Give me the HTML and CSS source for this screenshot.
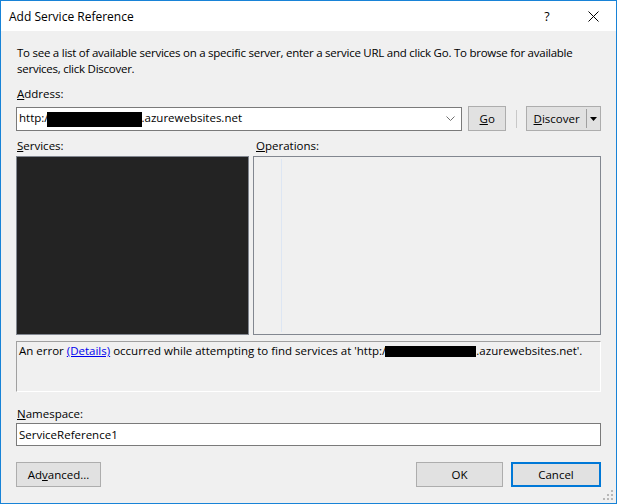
FILE: index.html
```html
<!DOCTYPE html>
<html lang="en">
<head>
    <meta charset="UTF-8">
    <title>Add Service Reference</title>
    <link rel="stylesheet" href="styles.css">
</head>
<body>
    <div class="window">
        <div class="titlebar">
            <span class="title">Add Service Reference</span>
            <span class="help">?</span>
            <span class="close">
                <svg width="11" height="11" viewBox="0 0 11 11"><path d="M0.5 0.5L10.5 10.5M10.5 0.5L0.5 10.5" stroke="#000" stroke-width="1"/></svg>
            </span>
        </div>

        <div class="content">
            <p class="desc">To see a list of available services on a specific server, enter a service URL and click Go. To browse for available services, click Discover.</p>

            <div class="field-label"><u>A</u>ddress:</div>
            <div class="address-row">
                <div class="combo">
                    <span class="combo-text">http:/<span class="redact redact-url"></span>.azurewebsites.net</span>
                    <svg class="chevron" width="9" height="5" viewBox="0 0 9 5"><path d="M0.5 0.5L4.5 4.5L8.5 0.5" fill="none" stroke="#707070"/></svg>
                </div>
                <div class="btn btn-go"><u>G</u>o</div>
                <span class="sep"></span>
                <div class="btn split">
                    <span class="split-main"><u>D</u>iscover</span>
                    <span class="split-arrow">
                        <svg width="7" height="4" viewBox="0 0 7 4"><path d="M0 0H7L3.5 4Z" fill="#000"/></svg>
                    </span>
                </div>
            </div>

            <div class="lists">
                <div class="col col-services">
                    <div class="field-label"><u>S</u>ervices:</div>
                    <div class="list list-dark"></div>
                </div>
                <div class="col col-ops">
                    <div class="field-label ops-label"><u>O</u>perations:</div>
                    <div class="list list-ops"><span class="tree-line"></span></div>
                </div>
            </div>

            <div class="status">An error <a href="#" class="link">(Details)</a> occurred while attempting to find services at 'http:/<span class="redact redact-status"></span>.azurewebsites.net'.</div>

            <div class="field-label ns-label"><u>N</u>amespace:</div>
            <div class="textbox">ServiceReference1</div>

            <div class="footer">
                <div class="btn btn-advanced">Ad<u>v</u>anced...</div>
                <div class="spacer"></div>
                <div class="btn btn-ok">OK</div>
                <div class="btn btn-cancel">Cancel</div>
            </div>
        </div>

        <svg class="grip" width="11" height="11" viewBox="0 0 11 11">
            <rect x="8" y="0" width="2" height="2" fill="#b8b8b8"/>
            <rect x="4" y="4" width="2" height="2" fill="#b8b8b8"/>
            <rect x="8" y="4" width="2" height="2" fill="#b8b8b8"/>
            <rect x="0" y="8" width="2" height="2" fill="#b8b8b8"/>
            <rect x="4" y="8" width="2" height="2" fill="#b8b8b8"/>
            <rect x="8" y="8" width="2" height="2" fill="#b8b8b8"/>
        </svg>
    </div>
</body>
</html>
```

FILE: styles.css
```css
* {
    box-sizing: border-box;
}
body {
    margin: 0;
    font-family: 'Segoe UI', 'Open Sans', 'Noto Sans', sans-serif;
    font-size: 11.5px;
    color: #000;
}
.window {
    position: relative;
    width: 617px;
    height: 504px;
    border: 1px solid #1883d7;
    background: #f0f0f0;
    display: flex;
    flex-direction: column;
}
.titlebar {
    height: 30px;
    background: #fff;
    display: flex;
    align-items: center;
    padding-left: 8px;
}
.title {
    flex: 1;
    font-size: 12px;
}
.help {
    width: 46px;
    text-align: center;
    font-size: 12.5px;
}
.close {
    width: 46px;
    display: flex;
    justify-content: center;
    align-items: center;
}
.content {
    padding: 0 15px;
    display: flex;
    flex-direction: column;
}
.desc {
    margin: 14px 0 0 1px;
    line-height: 16px;
    letter-spacing: -0.25px;
}
.field-label {
    line-height: 16px;
    margin: 9px 0 0 1px;
}
.address-row {
    display: flex;
    align-items: center;
    height: 25px;
    margin-top: 4px;
}
.combo {
    width: 447px;
    height: 24px;
    background: #fff;
    border: 1px solid #7a7a7a;
    display: flex;
    align-items: center;
    padding: 0 0 0 2px;
}
.combo-text {
    flex: 1;
    white-space: nowrap;
}
.chevron {
    margin-right: 6px;
}
.redact {
    display: inline-block;
    background: #000;
    vertical-align: middle;
}
.redact-url {
    width: 95px;
    height: 15px;
    margin-left: -2px;
}
.redact-status {
    width: 91px;
    height: 11px;
    margin-left: -1px;
}
.btn {
    height: 25px;
    background: #e1e1e1;
    border: 1px solid #adadad;
    display: flex;
    align-items: center;
    justify-content: center;
}
.btn-go {
    width: 38px;
    margin-left: 6px;
}
.sep {
    width: 1px;
    height: 18px;
    background: #c8c8c8;
    margin: 0 9px 0 10px;
}
.split {
    width: 75px;
    justify-content: flex-start;
}
.split-main {
    flex: 1;
    text-align: center;
    border-right: 1px solid #a0a0a0;
    line-height: 19px;
}
.split-arrow {
    width: 13px;
    display: flex;
    justify-content: center;
}
.lists {
    display: flex;
    gap: 4px;
    margin-top: -1px;
}
.col-services {
    width: 233px;
}
.col-ops {
    flex: 1;
}
.ops-label {
    margin-left: 3px;
}
.lists .field-label {
    margin-top: 8px;
}
.list {
    height: 179px;
    margin-top: 2px;
    border: 1px solid #828790;
}
.list-dark {
    background: #232323;
}
.list-ops {
    position: relative;
    background: #f0f0f0;
}
.tree-line {
    position: absolute;
    left: 27px;
    top: 2px;
    bottom: 2px;
    width: 1px;
    background: #dde6f3;
}
.status {
    height: 51px;
    margin-top: 6px;
    border: 1px solid #a0a0a0;
    border-right-color: #fff;
    border-bottom-color: #fff;
    padding: 1px 2px;
    line-height: 16px;
}
.link {
    color: #0000ee;
    text-decoration: underline;
}
.ns-label {
    margin-top: 14px;
}
.textbox {
    height: 23px;
    margin-top: 1px;
    background: #fff;
    border: 1px solid #7a7a7a;
    padding: 0 2px;
    line-height: 21px;
}
.footer {
    display: flex;
    margin-top: 16px;
}
.spacer {
    flex: 1;
}
.btn-advanced {
    width: 85px;
}
.btn-ok {
    width: 87px;
}
.btn-cancel {
    width: 90px;
    margin-left: 8px;
    border: 2px solid #0078d7;
}
.grip {
    position: absolute;
    right: 2px;
    bottom: 2px;
}
```
